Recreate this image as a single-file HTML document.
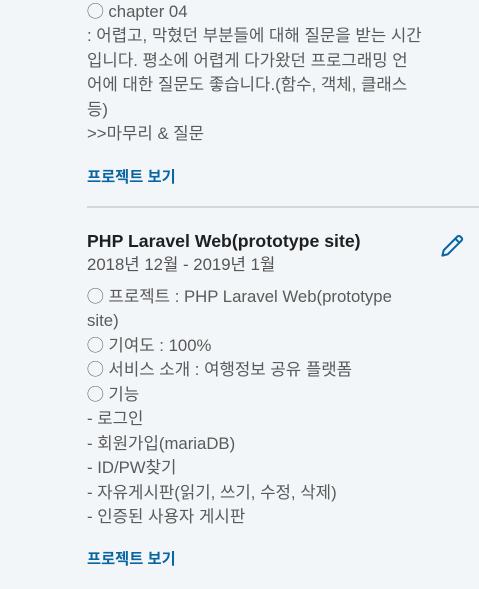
<!DOCTYPE html>
<html><head><meta charset="utf-8"><style>
body{margin:0;background:#f3f6f8;width:479px;height:589px;overflow:hidden;font-family:"Liberation Sans","Noto Sans CJK KR",sans-serif;}
.t{position:absolute;left:87px;font-size:16.75px;color:#5a5a5a;white-space:nowrap;line-height:20px;}
.l{position:absolute;left:87px;font-size:15.3px;font-weight:bold;color:#0a66a2;line-height:20px;}
.h{position:absolute;left:87px;font-size:17.7px;font-weight:bold;color:#1f1f1f;line-height:22px;}
.sep{position:absolute;left:87px;right:0;top:206px;height:2px;background:#d4d6d8;}
</style></head><body>
<div class="t" style="top:2px">◯ chapter 04</div>
<div class="t" style="top:26px">: 어렵고, 막혔던 부분들에 대해 질문을 받는 시간</div>
<div class="t" style="top:51px">입니다. 평소에 어렵게 다가왔던 프로그래밍 언</div>
<div class="t" style="top:75px">어에 대한 질문도 좋습니다.(함수, 객체, 클래스</div>
<div class="t" style="top:100px">등)</div>
<div class="t" style="top:124px">&gt;&gt;마무리 &amp; 질문</div>
<div class="l" style="top:168px">프로젝트 보기</div>
<div class="sep"></div>
<div class="h" style="top:230px">PHP Laravel Web(prototype site)</div>
<svg style="position:absolute;left:439px;top:232px" width="27" height="27" viewBox="0 0 24 24"><path d="M3 21l1.2-4.8L16.5 3.9a1.6 1.6 0 0 1 2.3 0l1.3 1.3a1.6 1.6 0 0 1 0 2.3L7.8 19.8z M14.5 5.9l3.6 3.6" fill="none" stroke="#0a66a2" stroke-width="1.8" stroke-linejoin="round"/></svg>
<div class="t" style="top:255px;color:#555">2018년 12월 - 2019년 1월</div>
<div class="t" style="top:287px">◯ 프로젝트 : PHP Laravel Web(prototype</div>
<div class="t" style="top:311px">site)</div>
<div class="t" style="top:336px">◯ 기여도 : 100%</div>
<div class="t" style="top:360px">◯ 서비스 소개 : 여행정보 공유 플랫폼</div>
<div class="t" style="top:385px">◯ 기능</div>
<div class="t" style="top:409px">- 로그인</div>
<div class="t" style="top:434px">- 회원가입(mariaDB)</div>
<div class="t" style="top:458px">- ID/PW찾기</div>
<div class="t" style="top:483px">- 자유게시판(읽기, 쓰기, 수정, 삭제)</div>
<div class="t" style="top:507px">- 인증된 사용자 게시판</div>
<div class="l" style="top:550px">프로젝트 보기</div>
</body></html>
